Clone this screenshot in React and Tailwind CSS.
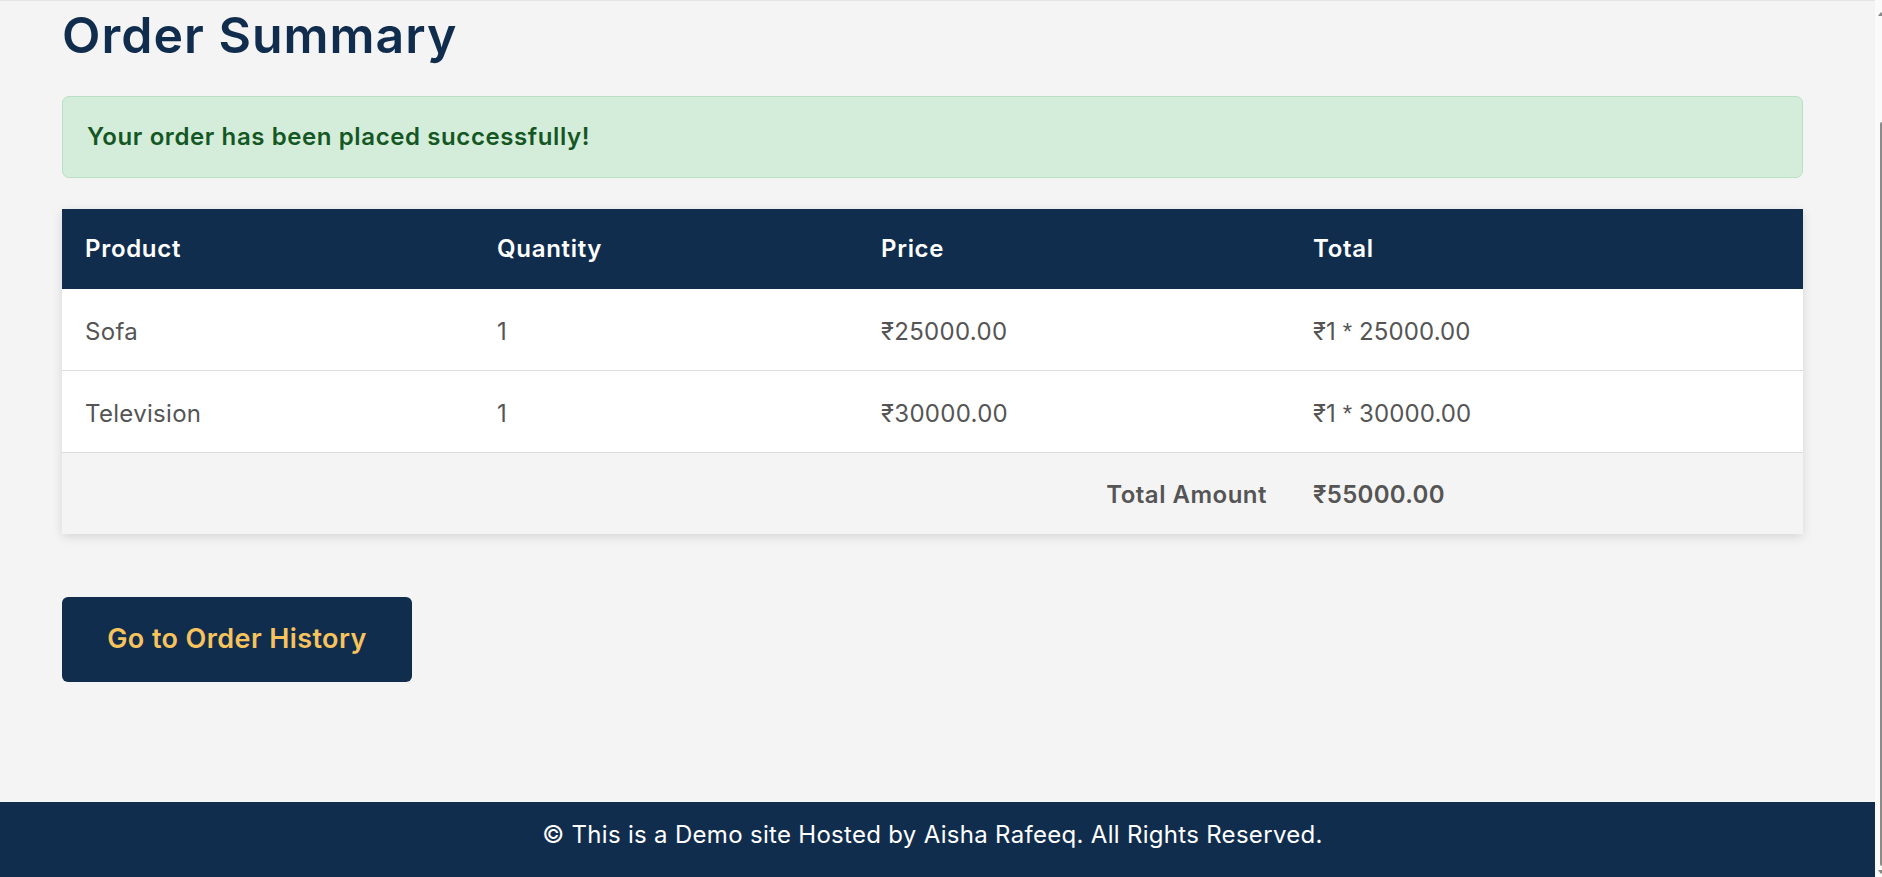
export default function App() {
  const rows = [
    { name: "Sofa", qty: 1, price: "₹25000.00", mult: "₹1 ", rest: " 25000.00" },
    { name: "Television", qty: 1, price: "₹30000.00", mult: "₹1 ", rest: " 30000.00" },
  ];
  return (
    <div className="flex h-[877px] w-[1882px] overflow-hidden bg-[#f4f4f4] font-['Inter','Noto_Sans',sans-serif]">
      <div className="flex w-[1875px] flex-col border-t border-[#e4e4e4]">
        <main className="flex-1 pl-[62px] pr-[72px]">
          <h1 className="mt-[5px] text-[50px] leading-[58px] font-semibold tracking-[1px] text-[#112d4e]">Order Summary</h1>
          <div className="mt-[32px] flex h-[82px] items-center rounded-[7px] border border-[#b9e0c3] bg-[#d4edda] px-[24px] text-[24px] font-semibold tracking-[0.6px] text-[#155724]">
            Your order has been placed successfully!
          </div>
          <table className="mt-[31px] w-full table-fixed border-collapse shadow-[0_3px_10px_rgba(0,0,0,0.12)]">
            <colgroup>
              <col className="w-[412px]" />
              <col className="w-[384px]" />
              <col className="w-[432px]" />
              <col />
            </colgroup>
            <thead>
              <tr className="bg-[#112d4e] text-left text-[24px] tracking-[0.7px] text-white">
                <th className="px-[23px] py-[22px] leading-[36px] font-semibold">Product</th>
                <th className="px-[23px] py-[22px] leading-[36px] font-semibold">Quantity</th>
                <th className="px-[23px] py-[22px] leading-[36px] font-semibold">Price</th>
                <th className="px-[23px] py-[22px] leading-[36px] font-semibold">Total</th>
              </tr>
            </thead>
            <tbody className="text-[24px] tracking-[0.3px] text-[#555555]">
              {rows.map((r) => (
                <tr key={r.name} className="border-b border-[#dddddd] bg-white">
                  <td className="px-[23px] pt-[24.5px] pb-[20.5px] leading-[36px]">{r.name}</td>
                  <td className="px-[23px] pt-[24.5px] pb-[20.5px] leading-[36px]">{r.qty}</td>
                  <td className="px-[23px] pt-[24.5px] pb-[20.5px] leading-[36px]">{r.price}</td>
                  <td className="px-[23px] pt-[24.5px] pb-[20.5px] leading-[36px] tracking-[0.1px]">
                    {r.mult}
                    <span className="font-['Liberation_Sans',sans-serif]">*</span>
                    {r.rest}
                  </td>
                </tr>
              ))}
              <tr className="bg-[#f4f4f4] font-semibold">
                <td colSpan={3} className="px-[23px] pt-[23.5px] pb-[21.5px] text-right leading-[36px] tracking-[0.5px]">Total Amount</td>
                <td className="px-[23px] pt-[23.5px] pb-[21.5px] leading-[36px]">₹55000.00</td>
              </tr>
            </tbody>
          </table>
          <button className="mt-[63px] flex h-[85px] w-[350px] items-center justify-center rounded-[6px] bg-[#112d4e] text-[27px] font-semibold tracking-[0.4px] text-[#f6c35c]">
            Go to Order History
          </button>
        </main>
        <footer className="h-[75px] bg-[#112d4e] pt-[15px] pr-[10px] text-center text-[24px] leading-[36px] tracking-[0.3px] text-white">
          © This is a Demo site Hosted by Aisha Rafeeq. All Rights Reserved.
        </footer>
      </div>
      <div className="flex w-[7px] flex-col bg-[#fafafa]">
        <div className="ml-[3px] mt-[12px] h-0 w-0 border-x-[3px] border-b-[4px] border-x-transparent border-b-[#888888]" />
        <div className="ml-[5px] mt-[106px] w-[2px] flex-1 rounded-l-[2px] bg-[#8b8b8b]" />
        <div className="mb-[3px] ml-[3px] mt-[4px] h-0 w-0 border-x-[3px] border-t-[4px] border-x-transparent border-t-[#888888]" />
      </div>
    </div>
  );
}
